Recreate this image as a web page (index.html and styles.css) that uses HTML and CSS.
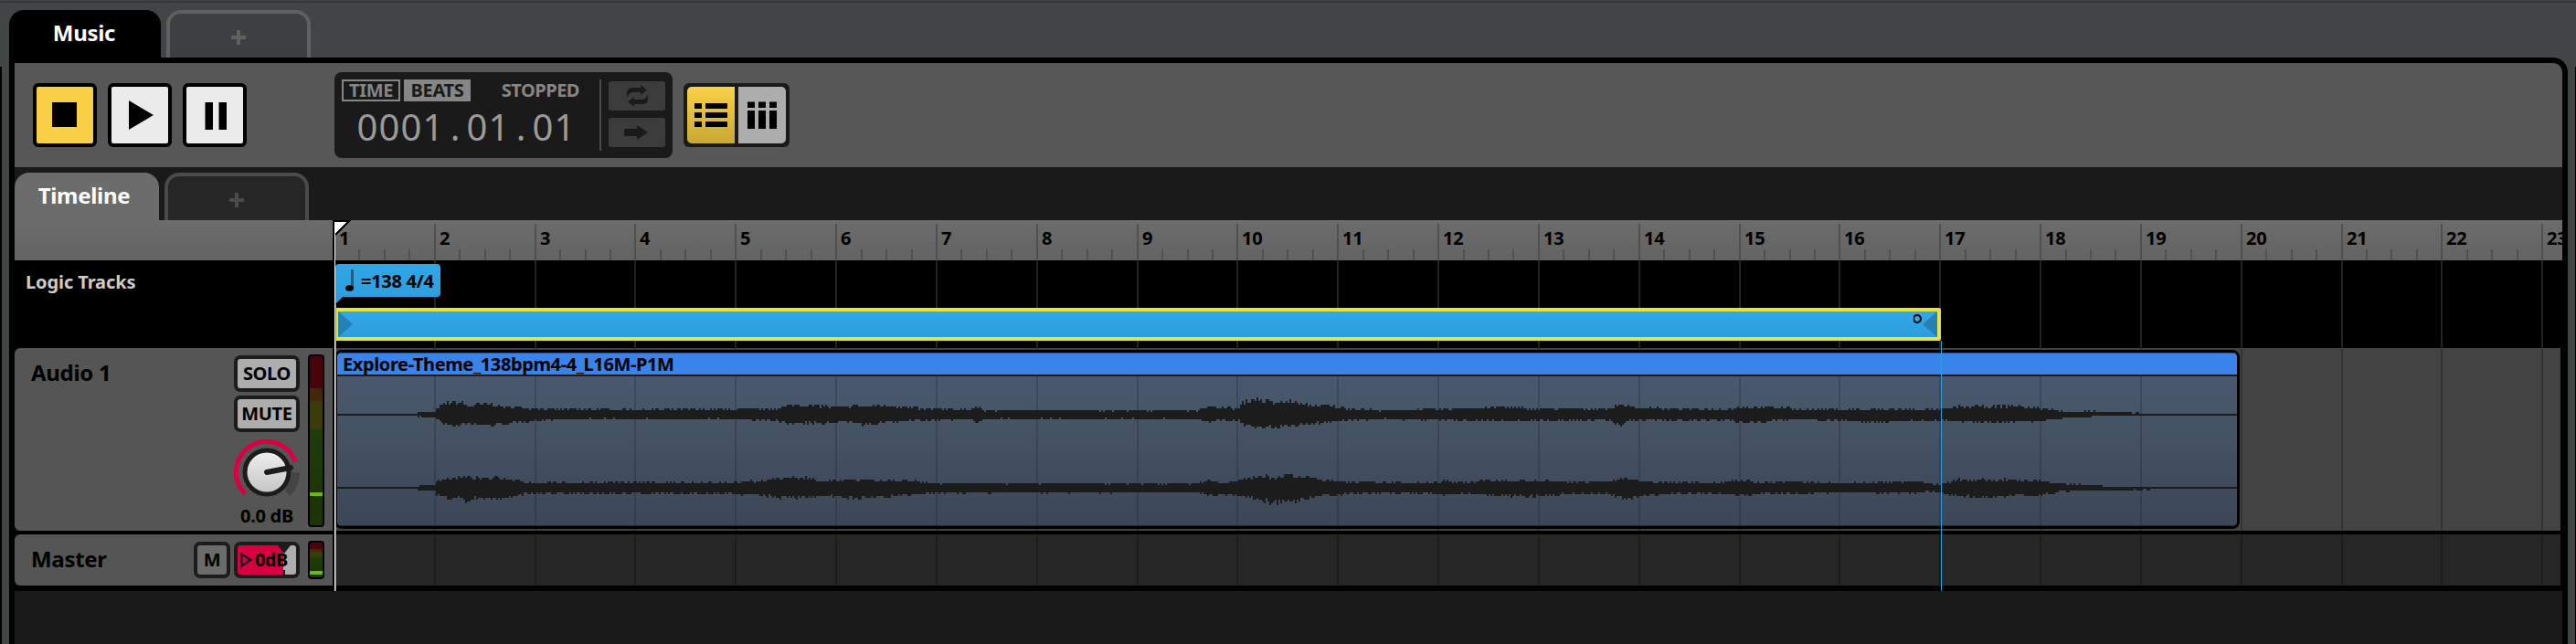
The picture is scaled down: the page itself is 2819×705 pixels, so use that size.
FILE: index.html
```html
<!DOCTYPE html>
<html lang="en">
<head>
    <meta charset="UTF-8">
    <meta name="viewport" content="width=device-width, initial-scale=1.0">
    <title>Music</title>
    <link rel="stylesheet" href="styles.css">
</head>
<body>
    <div class="tabs window-tabs">
        <div class="tab tab-active">Music</div>
        <div class="tab tab-add"><svg width="16" height="16"><path d="M6 0h4v6h6v4h-6v6h-4v-6h-6v-4h6z"/></svg></div>
    </div>

    <div class="window">
        <!-- transport -->
        <div class="toolbar">
            <div class="transport">
                <button class="transport-button stop"><svg width="62" height="62"><path d="M17 17h27v27h-27z"/></svg></button>
                <button class="transport-button"><svg width="62" height="62"><path d="M19 15l27 16-27 16z"/></svg></button>
                <button class="transport-button"><svg width="62" height="62"><path d="M20.500 17h8.500v30h-8.500zM35.500 17h8.500v30h-8.500z"/></svg></button>
            </div>
            <div class="display">
                <div class="display-main">
                    <div class="display-top">
                        <span class="mode">TIME</span>
                        <span class="mode mode-on">BEATS</span>
                        <span class="status">STOPPED</span>
                    </div>
                    <div class="position" id="position"></div>
                </div>
                <div class="display-side">
                    <div class="side-button"><svg width="62" height="32"><path d="M20 18v-5q0-6 6-6h9v-3l7 5.500-7 5.500v-3h-8q-5 0-7 6zM43 14v5q0 6-6 6h-9v3l-7-5.500 7-5.500v3h8q5 0 7-6z"/></svg></div>
                    <div class="side-button"><svg width="62" height="32"><path d="M18 12h13v-4l12 8-12 8v-4h-13q-1 0-1-1v-6q0-1 1-1z"/></svg></div>
                </div>
            </div>
            <div class="view-toggle">
                <div class="view view-on"><svg width="52" height="62"><path d="M8 18h8v6h-8zM20 18h24v6h-24zM8 28h8v6h-8zM20 28h24v6h-24zM8 38h8v6h-8zM20 38h24v6h-24z"/></svg></div>
                <div class="view"><svg width="52" height="62"><path d="M10 16.500h8v6.500h-8zM22 16.500h8v6.500h-8zM34 16.500h8v6.500h-8zM10 26h8v20h-8zM22 26h8v20h-8zM34 26h8v20h-8z"/></svg></div>
            </div>
        </div>

        <div class="tabs editor-tabs">
            <div class="tab tab-active">Timeline</div>
            <div class="tab tab-add"><svg width="16" height="16"><path d="M6 0h4v6h6v4h-6v6h-4v-6h-6v-4h6z"/></svg></div>
        </div>

        <div class="timeline">
            <div class="ruler">
                <div class="ruler-head"></div>
                <svg class="ruler-scale" id="ruler" width="2438" height="44"></svg>
            </div>

            <div class="row logic">
                <div class="logic-head">Logic Tracks</div>
                <div class="lane logic-lane">
                    <svg class="grid" width="2436" height="96"></svg>
                    <div class="tempo">
                        <svg width="12" height="24"><path class="stem" d="M6 0h3v20h-3z"/><ellipse cx="4.500" cy="20.500" rx="4.500" ry="3.200"/></svg>
                        <span>=138 4/4</span>
                    </div>
                    <div class="loop">
                        <svg width="16" height="28"><path d="M0 0l16 14-16 14z"/></svg>
                        <svg class="loop-end" width="26" height="28"><circle cx="4" cy="8" r="4"/><path d="M26 0l-16 14 16 14z"/></svg>
                    </div>
                </div>
            </div>

            <div class="row audio">
                <div class="head audio-head">
                    <span class="name">Audio 1</span>
                    <div class="controls">
                        <button class="small-button">SOLO</button>
                        <button class="small-button">MUTE</button>
                        <svg class="knob" width="72" height="76">
                            <defs>
                                <linearGradient id="cap" x1="0" y1="0" x2="0" y2="1">
                                    <stop offset="0" stop-color="#f0f0f0"/>
                                    <stop offset="1" stop-color="#c4c4c4"/>
                                </linearGradient>
                            </defs>
                            <path class="arc-rest" d="M67.500 36A31.500 31.500 0 0 1 58.300 58.300"/>
                            <path class="arc" d="M12.400 59.600A33.400 33.400 0 1 1 67.200 24.500"/>
                            <circle cx="36" cy="36" r="24" fill="url(#cap)"/>
                            <path class="pointer" d="M36 36l26-5"/>
                        </svg>
                        <span class="gain">0.0 dB</span>
                    </div>
                    <div class="meter"><i></i></div>
                </div>
                <div class="lane audio-lane">
                    <svg class="grid" width="2436" height="200"></svg>
                    <div class="clip">
                        <div class="clip-title">Explore-Theme_138bpm4-4_L16M-P1M</div>
                        <div class="clip-body">
                            <svg class="grid clip-grid" width="2080" height="164"></svg>
                            <svg class="wave" id="wave" width="2080" height="164"></svg>
                        </div>
                    </div>
                </div>
            </div>

            <div class="row master">
                <div class="head master-head">
                    <span class="name">Master</span>
                    <button class="small-button mute">M</button>
                    <div class="fader">
                        <svg width="64" height="32">
                            <path class="notch" d="M44 0h14l-7 9z"/>
                            <path class="notch" d="M50 27h2v5h-2z"/>
                            <path class="outline" d="M4.200 9.500l10 6.500-10 6.500z"/>
                        </svg>
                        <span>0dB</span>
                    </div>
                    <div class="meter"><i></i></div>
                </div>
                <div class="lane master-lane">
                    <svg class="grid" width="2436" height="56"></svg>
                </div>
            </div>

            <svg class="playhead" width="20" height="406"><path class="flag-edge" d="M0 0h18l-18 19z"/><path class="flag" d="M0 2h13l-13 13z"/><path class="flag" d="M0 2h1v404h-1z"/><path class="head-line" d="M1 92h1v314h-1z"/></svg>
            <div class="loop-line"></div>
        </div>
    </div>

    <script src="script.js"></script>
</body>
</html>
```

FILE: script.js
```js
const BEAT = 27.457;
const BARS = 23;
const ORIGIN = -1;      // first bar, relative to the lane

function beatX(n) {
    return Math.round(ORIGIN + n * BEAT);
}

function drawPosition() {
    document.getElementById('position').innerHTML =
        '0001.01.01'.split('').map(c => `<span>${c}</span>`).join('');
}

function drawRuler() {
    let svg = '';
    for (let n = 0; n < BARS * 4 - 3; n++) {
        const x = beatX(n);
        if (n % 4 === 0) {
            if (n > 0) svg += `<rect x="${x}" y="4" width="2" height="40"/>`;
            svg += `<text x="${x + 6}" y="27">${n / 4 + 1}</text>`;
        } else {
            svg += `<rect x="${x}" y="32" width="2" height="12"/>`;
        }
    }
    document.getElementById('ruler').innerHTML = svg;
}

function drawGrids() {
    document.querySelectorAll('.grid').forEach(grid => {
        const offset = grid.classList.contains('clip-grid') ? 3 : 0;
        let svg = '';
        for (let bar = 1; bar < BARS; bar++) {
            svg += `<rect x="${beatX(bar * 4) - offset}" y="0" width="2" height="100%"/>`;
        }
        grid.innerHTML = svg;
    });
}

// envelope points: x, peak above, peak below
const left = [
    [0, 1, 1], [86, 1, 1], [88, 3, 2], [106, 3, 3], [108, 7, 5], [120, 13, 12], [134, 14, 13], [140, 10, 10], [148, 11, 11],
    [168, 12, 12], [176, 9, 11], [200, 8, 8], [223, 7, 6], [240, 6, 5], [440, 6, 5], [478, 7, 7], [498, 11, 10], [528, 10, 10],
    [548, 8, 7], [570, 11, 9], [574, 9, 12], [597, 11, 9], [626, 8, 7], [650, 6, 6], [692, 6, 5], [700, 8, 8], [708, 5, 5],
    [940, 5, 5], [948, 9, 8], [986, 7, 6], [989, 13, 12], [1004, 18, 13], [1014, 15, 16], [1030, 13, 13], [1044, 16, 14],
    [1056, 11, 11], [1085, 10, 8], [1107, 7, 6], [1140, 5, 5], [1205, 6, 6], [1272, 9, 7], [1300, 7, 7], [1392, 7, 6],
    [1404, 12, 12], [1416, 8, 6], [1520, 6, 6], [1538, 9, 9], [1583, 8, 6], [1600, 6, 5], [1679, 6, 8], [1755, 6, 6],
    [1772, 9, 8], [1832, 10, 8], [1865, 7, 7], [1889, 4, 4], [1923, 4, 2], [1930, 3, 1], [1973, 2, 1], [1976, 1, 1], [2080, 1, 1]
];
const right = [
    [0, 1, 1], [86, 1, 1], [88, 2, 2], [106, 3, 3], [108, 7, 8], [120, 10, 12], [134, 12, 12], [144, 12, 16], [148, 11, 12],
    [171, 11, 12], [196, 9, 9], [206, 6, 7], [230, 6, 6], [438, 6, 7], [461, 8, 8], [483, 11, 12], [520, 11, 10], [528, 7, 8],
    [568, 9, 12], [608, 8, 9], [635, 7, 7], [650, 5, 6], [940, 5, 5], [951, 9, 9], [970, 5, 7], [989, 9, 9], [1009, 14, 13],
    [1022, 12, 17], [1044, 14, 16], [1067, 11, 12], [1080, 8, 8], [1140, 6, 6], [1200, 6, 6], [1214, 8, 8], [1230, 6, 6],
    [1277, 9, 9], [1310, 8, 10], [1340, 7, 7], [1392, 7, 7], [1406, 11, 13], [1430, 7, 9], [1460, 7, 7], [1500, 5, 6],
    [1540, 9, 9], [1555, 6, 6], [1593, 7, 7], [1640, 5, 5], [1722, 7, 6], [1746, 4, 4], [1755, 5, 6], [1772, 9, 9],
    [1808, 9, 11], [1832, 9, 9], [1858, 8, 9], [1880, 6, 5], [1898, 4, 4], [1930, 3, 3], [1932, 1, 3], [1985, 1, 2], [1988, 1, 1], [2080, 1, 1]
];

let seed = 7;
function random() {
    seed = (seed * 16807) % 2147483647;
    return seed / 2147483647;
}

// peaks land on odd heights, two pixels apart
function peak(value) {
    if (value <= 1) return 1;
    return Math.max(1, Math.round((value * (0.78 + random() * 0.36) - 1) / 2) * 2 + 1);
}

function wavePath(points, mid) {
    let path = '', i = 0;
    for (let x = 0; x < 2080; x += 2) {
        while (i < points.length - 2 && points[i + 1][0] <= x) i++;
        const a = points[i], b = points[i + 1];
        const t = (x - a[0]) / (b[0] - a[0]);
        const up = peak(a[1] + (b[1] - a[1]) * t);
        const down = peak(a[2] + (b[2] - a[2]) * t);
        path += `M${x} ${mid - up}h2v${up + down}h-2z`;
    }
    return path;
}

function drawWave() {
    document.getElementById('wave').innerHTML =
        `<path d="${wavePath(left, 42)}"/><path d="${wavePath(right, 122)}"/>`;
}

drawPosition();
drawRuler();
drawGrids();
drawWave();
```

FILE: styles.css
```css
* {
    box-sizing: border-box;
}
body {
    margin: 0;
    height: 705px;
    padding: 11px 9px 0 10px;
    overflow: hidden;
    position: relative;
    background: #414545;
    font-family: "Noto Sans", "Open Sans", sans-serif;
    font-size: 20px;
    font-weight: 700;
    letter-spacing: -0.3px;
    color: #000;
}
/* edges of the neighbouring panels */
body::before {
    content: "";
    position: absolute;
    left: 0;
    right: 0;
    top: 73px;
    bottom: 0;
    border: solid #000;
    border-width: 0 1px 0 2px;
}
body::after {
    content: "";
    position: absolute;
    left: 0;
    right: 0;
    top: 1px;
    height: 2px;
    background: #343838;
}
svg {
    display: block;
}
button {
    padding: 0;
    font: inherit;
    letter-spacing: inherit;
    color: inherit;
}

.tabs {
    display: flex;
    gap: 6px;
}
.tab {
    width: 158px;
    height: 52px;
    border-radius: 16px 16px 0 0;
    font-size: 24px;
    line-height: 50px;
    text-align: center;
    color: #fff;
}
.tab-add {
    display: flex;
    justify-content: center;
    padding-top: 18px;
    border: 4px solid #606060;
    border-bottom: 0;
    background: #3c4040;
    fill: #606060;
}
.window-tabs .tab-active {
    width: 166px;
    padding-right: 2px;
    background: #000;
}

.window {
    position: relative;
    height: 642px;
    border: 6px solid #000;
    border-bottom: 0;
    border-top-right-radius: 16px;
    background: #1a1a1a;
    overflow: hidden;
}
.toolbar {
    display: flex;
    align-items: flex-start;
    height: 114px;
    padding: 10px 20px;
    background: #575757;
}
.transport {
    display: flex;
    gap: 12px;
    width: 330px;
    padding-top: 12px;
}
.transport-button {
    width: 70px;
    height: 70px;
    border: 4px solid #000;
    border-radius: 6px;
    background: #ebebeb;
}
.transport-button.stop {
    background: #f9cf45;
}
.display {
    display: flex;
    width: 370px;
    height: 94px;
    padding: 8px;
    border-radius: 8px;
    background: #1a1a1a;
    color: #868686;
}
.display-main {
    width: 284px;
    height: 78px;
    border-right: 2px solid #4a4a4a;
}
.display-top {
    display: flex;
    gap: 4px;
    line-height: 20px;
}
.mode {
    width: 64px;
    height: 24px;
    border: 2px solid #868686;
    text-align: center;
}
.mode-on {
    width: 73px;
    background: #868686;
    color: #1a1a1a;
}
.status {
    margin-left: auto;
    padding: 2px 22px 0 0;
    letter-spacing: -0.5px;
}
.position {
    display: flex;
    padding-left: 16px;
    font-size: 40px;
    font-weight: 400;
    letter-spacing: 0;
    line-height: 56px;
    color: #9a9a9a;
}
.position span {
    width: 24px;
    text-align: center;
}
.display-side {
    display: grid;
    gap: 8px;
    padding: 2px 0 0 8px;
    align-content: start;
}
.side-button {
    width: 62px;
    height: 32px;
    border-radius: 3px;
    background: #3c3c3c;
    fill: #1a1a1a;
}
.view-toggle {
    display: flex;
    margin: 12px 0 0 12px;
    gap: 4px;
    padding: 4px;
    border-radius: 6px;
    background: #1a1a1a;
}
.view {
    height: 62px;
    border-radius: 0 5px 5px 0;
    background: #adadad;
}
.view-on {
    border-radius: 5px 0 0 5px;
    background: linear-gradient(#fad24a, #c8a834);
}

.editor-tabs {
    padding-top: 6px;
    height: 58px;
}
.editor-tabs .tab-active {
    padding-right: 6px;
    background: #6c6c6c;
}
.editor-tabs .tab-add {
    border-color: #4a4a4a;
    background: #262626;
    fill: #4a4a4a;
}

.timeline {
    position: relative;
    height: 406px;
    background: #000;
}
.ruler {
    display: flex;
    height: 44px;
    background: linear-gradient(#6c6c6c, #636363);
}
.ruler-head {
    width: 350px;
    border-right: 2px solid #000;
}
.ruler-scale rect {
    fill: #505050;
}
.row {
    display: flex;
}
.lane {
    position: relative;
    width: 2436px;
    margin-left: 2px;
}
.grid {
    position: absolute;
    left: 0;
    top: 0;
    fill: #222;
}

.logic-head {
    width: 348px;
    padding: 8px 0 0 12px;
    line-height: 32px;
    letter-spacing: -0.1px;
    color: #ccc;
}
.logic-lane {
    height: 96px;
}
.tempo {
    position: absolute;
    left: 1px;
    top: 4px;
    display: flex;
    gap: 5px;
    width: 115px;
    height: 36px;
    padding: 6px 0 0 11px;
    border-radius: 4px;
    background: linear-gradient(#30a7e7, #2e9fde);
    line-height: 25px;
    white-space: nowrap;
}
.tempo::after {
    content: "";
    position: absolute;
    left: 0;
    top: 33px;
    border: solid transparent;
    border-width: 11px 11px 0 0;
    border-top-color: #2e9fde;
}
.stem {
    fill: #1c5f82;
}
.loop {
    position: absolute;
    left: 0;
    top: 52px;
    display: flex;
    justify-content: space-between;
    width: 1758px;
    height: 36px;
    border: 4px solid #e4e441;
    border-left-width: 4px;
    border-radius: 0 2px 2px 0;
    background: linear-gradient(#31a9e9, #2d9cdc);
    fill: #2681b5;
}
.loop circle {
    fill: none;
    stroke: #000;
    stroke-width: 2.2;
}

.head {
    display: flex;
    width: 348px;
    border-radius: 6px 0 0 6px;
    background: #555;
}
.name {
    flex: 1;
    padding-left: 18px;
    font-size: 24px;
    line-height: 32px;
}
.audio-head {
    height: 200px;
    padding-top: 7px;
}
.audio-head .name {
    padding-top: 4px;
}
.controls {
    display: grid;
    gap: 4px;
    padding-top: 1px;
    align-content: start;
    justify-items: center;
    width: 72px;
}
.small-button {
    width: 72px;
    height: 40px;
    border: 4px solid #1c1c1c;
    border-radius: 7px;
    background: #adadad;
    line-height: 32px;
}
.knob {
    margin-top: 4px;
    overflow: visible;
}
.knob path {
    fill: none;
}
.knob circle {
    stroke: #1c1c1c;
    stroke-width: 5;
}
.knob .arc {
    stroke: #d90042;
    stroke-width: 5;
}
.knob .arc-rest {
    stroke: #444;
    stroke-width: 9;
}
.knob .pointer {
    stroke: #1c1c1c;
    stroke-width: 6;
    stroke-linecap: round;
}
.gain {
    line-height: 20px;
    margin-top: -6px;
}
.meter {
    display: flex;
    flex-direction: column;
    justify-content: flex-end;
    width: 18px;
    height: 189px;
    margin: 0 9px;
    padding-bottom: 32px;
    border: 2px solid #000;
    border-radius: 4px;
    background: linear-gradient(#47040a 19%, #44270a 19% 26.500%, #3b3c08 26.500% 43%, #203c08 43%, #1d3306);
}
.meter i {
    height: 4px;
    background: #6bb90f;
}
.audio-lane {
    height: 200px;
    background: #434343;
}
.audio-lane .grid {
    fill: #333;
}
.clip {
    position: absolute;
    left: 0;
    top: 2px;
    width: 2085px;
    height: 196px;
    border: 3px solid #000;
    border-radius: 8px;
    background: #3c4657;
    overflow: hidden;
}
.clip-title {
    height: 26px;
    padding-left: 6px;
    border-top: 1px solid #29518c;
    border-bottom: 2px solid #1c1c1c;
    background: #3a83ea;
    line-height: 23px;
    letter-spacing: -0.38px;
}
.clip-body {
    position: relative;
    height: 164px;
    background: linear-gradient(#4a5870, #465566 25%, #3c4657);
    border-bottom: 1px solid #20252e;
}
.audio-lane .clip-grid {
    fill: rgba(20, 30, 50, 0.25);
}
.wave {
    position: relative;
    fill: #1c1c1c;
    shape-rendering: crispEdges;
}

.master {
    margin-top: 4px;
}
.master-head {
    height: 56px;
    padding-top: 8px;
    gap: 4px;
}
.master-head .name {
    padding-top: 3px;
}
.mute {
    width: 40px;
    background: #6b6b6b;
}
.fader {
    position: relative;
    width: 72px;
    height: 40px;
    border: 4px solid #1c1c1c;
    border-radius: 7px;
    background: linear-gradient(90deg, #d90042 50px, #adadad 50px);
}
.fader span {
    position: absolute;
    left: 19px;
    top: 0;
    line-height: 32px;
    letter-spacing: -0.6px;
}
.notch {
    fill: #1c1c1c;
}
.outline {
    fill: none;
    stroke: #1c1c1c;
    stroke-width: 2.6;
}
.master-head .meter {
    height: 42px;
    margin: -1px 9px 0 5px;
    padding-bottom: 3px;
}
.master-lane {
    height: 56px;
    background: #262626;
}
.master-lane .grid {
    fill: #1c1c1c;
}

.playhead {
    position: absolute;
    left: 350px;
    top: 0;
    shape-rendering: crispEdges;
}
.flag {
    fill: #fff;
}
.head-line {
    fill: #2e9fde;
}
.loop-line {
    position: absolute;
    left: 2108px;
    top: 132px;
    bottom: 0;
    width: 1px;
    background: #2e9fde;
}
```
